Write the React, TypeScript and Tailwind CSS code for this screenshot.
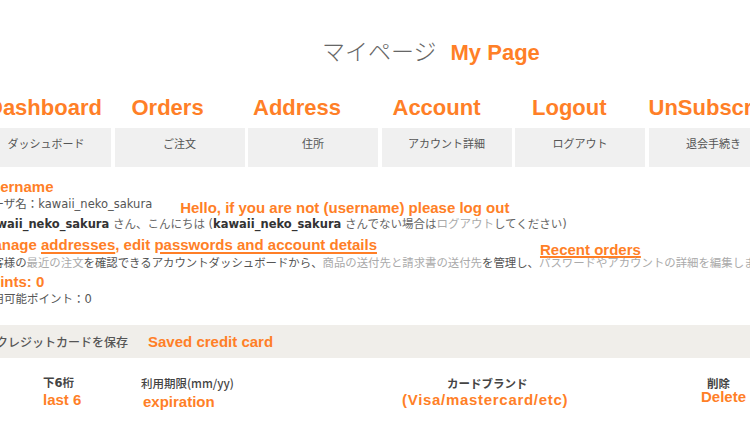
const orange = 'text-[#ff7f27]'

const tabs = [
  { en: 'Dashboard', ja: 'ダッシュボード', off: 'pl-[6px]' },
  { en: 'Orders', ja: 'ご注文', off: 'pl-[17px]' },
  { en: 'Address', ja: '住所', off: 'pl-[5px]' },
  { en: 'Account', ja: 'アカウント詳細', off: 'pl-[11px]' },
  { en: 'Logout', ja: 'ログアウト', off: 'pl-[17px]' },
  { en: 'UnSubscribe', ja: '退会手続き', off: 'pl-0' },
]

function Note({ children, className = '' }: { children: React.ReactNode; className?: string }) {
  return (
    <div className={`font-['Liberation_Sans',sans-serif] font-bold text-[15px] leading-[18px] whitespace-nowrap ${orange} ${className}`}>
      {children}
    </div>
  )
}

export default function App() {
  return (
    <div className="w-[750px] h-[425px] overflow-hidden bg-white font-['DejaVu_Sans','Noto_Sans_CJK_JP',sans-serif] text-[11.5px] text-[#555]">
      <div className="-ml-[19px] w-[860px]">
        {/* title */}
        <div className="pt-[35px] pl-[341px] flex items-baseline gap-[14px] h-[65px] leading-[30px]">
          <span className="font-['Noto_Sans_CJK_JP',sans-serif] text-[23px] text-[#666] font-light">マイページ</span>
          <span className={`font-['Liberation_Sans',sans-serif] font-bold text-[22px] ${orange}`}>My Page</span>
        </div>

        {/* tabs */}
        <div className="mt-[30px] grid grid-cols-[repeat(6,130px)] gap-x-[3.5px]">
          {tabs.map((t) => (
            <div key={t.en}>
              <div className={`h-[26px] leading-[26px] font-['Liberation_Sans',sans-serif] font-bold text-[22px] whitespace-nowrap ${orange} ${t.off}`}>
                {t.en}
              </div>
              <div className="mt-[7px] h-[39px] bg-[#f0f0f0] pt-[8px] text-center leading-[14px] text-[11px] text-[#555] font-['Noto_Sans_CJK_JP',sans-serif]">
                {t.ja}
              </div>
            </div>
          ))}
        </div>

        {/* account info */}
        <Note className="mt-[11px]">Username</Note>
        <div className="flex h-[16px] leading-[16px]">
          <span className="whitespace-nowrap">ユーザ名：kawaii_neko_sakura</span>
          <Note className="ml-[28px] mt-[3px]">Hello, if you are not (username) please log out</Note>
        </div>
        <div className="mt-[4px] leading-[16px] whitespace-nowrap text-[#666]">
          <b className="text-[#333]">kawaii_neko_sakura</b> さん、こんにちは (<b className="text-[#333]">kawaii_neko_sakura</b> さんでない場合は<span className="text-[#aaa]">ログアウト</span>してください)
        </div>

        <div className="mt-[3.5px] flex h-[18px]">
          <Note>
            Manage <span className="underline decoration-2 underline-offset-2">addresses</span>, edit{' '}
            <span className="underline decoration-2 underline-offset-2">passwords and account details</span>
          </Note>
          <Note className="ml-[163px] mt-[5px] underline decoration-2 underline-offset-1">Recent orders</Note>
        </div>
        <div className="leading-[16px] whitespace-nowrap font-['Noto_Sans_CJK_JP',sans-serif] text-[11.4px] text-[#555]">
          お客様の<span className="text-[#aaa]">最近の注文</span>を確認できるアカウントダッシュボードから、
          <span className="text-[#aaa]">商品の送付先と請求書の送付先</span>を管理し、
          <span className="text-[#aaa]">パスワードやアカウントの詳細を編集します</span>。
        </div>

        <Note className="mt-[3.5px]">Points: 0</Note>
        <div className="leading-[16px] whitespace-nowrap">利用可能ポイント：0</div>

        {/* saved cards */}
        <div className="mt-[18px] h-[33px] bg-[#f0eeea] flex items-center pl-[15px] gap-[20px]">
          <span className="font-['Noto_Sans_CJK_JP',sans-serif] text-[12px] font-medium text-[#555]">クレジットカードを保存</span>
          <Note>Saved credit card</Note>
        </div>

        <div className="mt-[17px] pl-[62px] grid grid-cols-[98px_261px_299px_1fr] leading-[16px] font-bold text-[#444]">
          <span>下6桁</span>
          <span className="font-['Noto_Sans_CJK_JP',sans-serif] font-medium">利用期限(mm/yy)</span>
          <span className="pl-[45px] font-['Noto_Sans_CJK_JP',sans-serif]">カードブランド</span>
          <span className="pl-[6px] font-['Noto_Sans_CJK_JP',sans-serif]">削除</span>
        </div>
        <div className="pl-[62px] grid grid-cols-[98px_261px_299px_1fr]">
          <Note>last 6</Note>
          <Note className="ml-[2px] mt-[1.5px]">expiration</Note>
          <Note className="tracking-[0.7px]">(Visa/mastercard/etc)</Note>
          <Note className="-mt-[3px]">Delete</Note>
        </div>
      </div>
    </div>
  )
}
